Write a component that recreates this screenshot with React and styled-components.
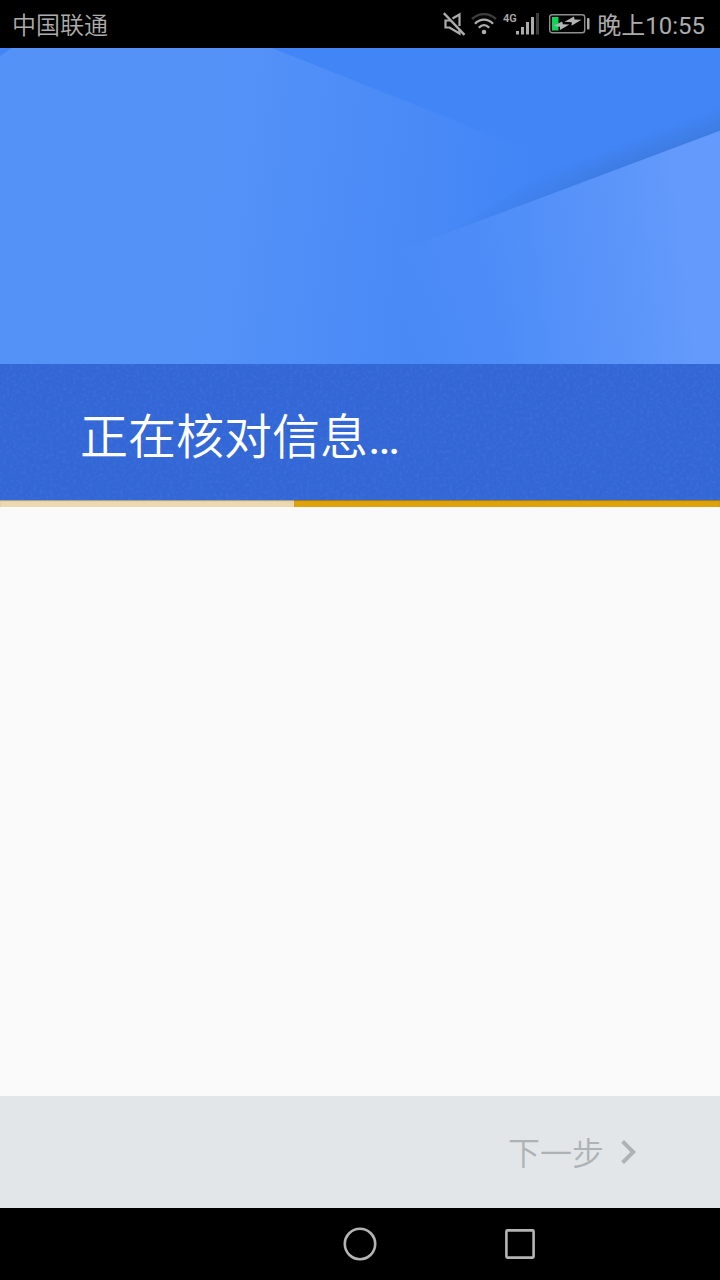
import React from "react";
import styled, { createGlobalStyle } from "styled-components";

const GlobalStyle = createGlobalStyle`
  * { box-sizing: border-box; }
  body {
    margin: 0;
    background: #fafafa;
    font-family: Roboto, "Noto Sans CJK SC", sans-serif;
  }
`;

const Screen = styled.div`
  display: flex;
  flex-direction: column;
  min-height: 100vh;
`;

const StatusBar = styled.header`
  display: flex;
  align-items: center;
  justify-content: space-between;
  height: 48px;
  padding: 0 15px 0 12px;
  background: #000;
  color: #acacac;
  font-size: 24px;
  line-height: 32px;
  white-space: nowrap;
`;

const StatusText = styled.span`
  padding-top: 4px;
  font-weight: ${(p) => p.$weight || 400};
`;

const StatusIcons = styled.div`
  display: flex;
  align-items: center;
  gap: 4px;
`;

const Icon = styled.svg`
  display: block;
  flex: none;
`;

const Art = styled.svg`
  display: block;
  width: 100%;
  aspect-ratio: 720 / 316;
  background: #4285f6;
`;

const TitleBand = styled.div`
  display: grid;
  height: 136px;
  background: #3367d6;
`;

const Grain = styled.svg`
  grid-area: 1 / 1;
  width: 100%;
  height: 100%;
`;

const Title = styled.h1`
  grid-area: 1 / 1;
  align-self: center;
  margin: 0;
  padding: 12px 80px 0;
  color: #fff;
  font-size: 48px;
  font-weight: 350;
  line-height: 64px;
`;

const Ellipsis = styled.span`
  font-weight: 400;
`;

const Progress = styled.div`
  display: flex;
  height: 7px;
  background: #ecd9b0;
  box-shadow: inset 0 1px 1px rgba(60, 60, 60, 0.4);
`;

const ProgressBar = styled.div`
  width: 59.2%;
  margin-left: auto;
  background: #dfa20c;
  box-shadow: inset 0 1px 1px rgba(60, 60, 60, 0.4);
`;

const Content = styled.main`
  flex: 1;
  background: #fafafa;
`;

const Footer = styled.footer`
  display: flex;
  align-items: center;
  justify-content: flex-end;
  height: 112px;
  padding: 0 68px;
  background: #e2e6e9;
`;

const NextButton = styled.button`
  display: flex;
  align-items: center;
  padding: 0;
  border: 0;
  background: none;
  color: #afb2b4;
  font: inherit;
  font-size: 32px;
  font-weight: 350;
  line-height: 48px;
`;

const NextLabel = styled.span`
  padding-top: 4px;
`;

const NavBar = styled.nav`
  display: grid;
  grid-template-columns: repeat(3, 160px);
  justify-content: center;
  height: 72px;
  background: #000;
`;

const NavButton = styled.button`
  grid-column: ${(p) => p.$column};
  display: flex;
  align-items: center;
  justify-content: center;
  padding: 0;
  border: 0;
  background: none;
  color: #b4b4b4;
`;

const MuteIcon = () => (
  <Icon width="24" height="48" viewBox="0 0 24 48" fill="none" stroke="#acacac" strokeWidth="2.200" aria-label="静音" role="img">
    <path d="M7 20.500H2.500v7H6.500L16.500 33.500V30" />
    <path d="M9.500 18.500L16.500 14.500V26" />
    <path d="M0.800 13.200L21.500 34.800" strokeWidth="2.400" />
  </Icon>
);

const WifiIcon = () => (
  <Icon width="28" height="48" viewBox="0 0 28 48" fill="none" strokeWidth="2.400" aria-label="Wi-Fi" role="img">
    <path d="M1 19C8 12.500 18 12.500 25 19" stroke="#3d3d3d" />
    <path d="M4 23.700C9 18.200 17 18.200 22 23.700" stroke="#acacac" />
    <path d="M7.800 27.700C11 24.200 15 24.200 18.200 27.700" stroke="#acacac" />
    <circle cx="13" cy="32" r="2.300" fill="#acacac" />
  </Icon>
);

const SignalIcon = () => (
  <Icon width="42" height="48" viewBox="0 0 42 48" fill="#acacac" aria-label="4G" role="img">
    <text x="0" y="22" fontFamily="Roboto, sans-serif" fontSize="11" fontWeight="600">4G</text>
    <rect x="13" y="31" width="3" height="3.500" />
    <rect x="18" y="27" width="3" height="7.500" />
    <rect x="23" y="22" width="3" height="12.500" />
    <rect x="28" y="17" width="3" height="17.500" />
    <rect x="33" y="13" width="3" height="21.500" fill="#3d3d3d" />
  </Icon>
);

const BatteryIcon = () => (
  <Icon width="44" height="48" viewBox="0 0 44 48" aria-label="正在充电" role="img">
    <rect x="0.700" y="14.700" width="35" height="18" rx="2.500" fill="none" stroke="#8e8e8e" strokeWidth="1.400" />
    <rect x="38" y="18" width="2.500" height="11.500" rx="1" fill="#acacac" />
    <rect x="3" y="17" width="6.500" height="13.500" fill="#0cd558" />
    <path d="M4.500 26L13 21.500 14 24.200 20.500 24.500 11 30 11 26.800z" fill="#b4b4b4" />
    <path d="M15.500 21.800L25 16.500 25.500 19.500 32.500 19.800 22.500 25.800 22.800 22.300z" fill="#b4b4b4" />
  </Icon>
);

function HeroArt() {
  return (
    <Art viewBox="0 0 720 317" preserveAspectRatio="none" aria-hidden="true">
      <defs>
        <linearGradient id="leftFacet" gradientUnits="userSpaceOnUse" x1="215" y1="150" x2="525" y2="185">
          <stop offset="0" stopColor="#5592f8" />
          <stop offset="1" stopColor="#5592f8" stopOpacity="0" />
        </linearGradient>
        <linearGradient id="rightFacet" gradientUnits="userSpaceOnUse" x1="400" y1="240" x2="685" y2="208">
          <stop offset="0" stopColor="#639afb" stopOpacity="0" />
          <stop offset="1" stopColor="#639afb" />
        </linearGradient>
        <linearGradient id="fold" gradientUnits="userSpaceOnUse" x1="640" y1="113" x2="632" y2="92">
          <stop offset="0" stopColor="#3c79dc" stopOpacity="0.750" />
          <stop offset="1" stopColor="#3c79dc" stopOpacity="0" />
        </linearGradient>
        <linearGradient id="foldFade" gradientUnits="userSpaceOnUse" x1="450" y1="0" x2="600" y2="0">
          <stop offset="0" stopColor="#000" />
          <stop offset="1" stopColor="#fff" />
        </linearGradient>
        <mask id="foldMask" maskUnits="userSpaceOnUse" x="0" y="0" width="720" height="317">
          <rect width="720" height="317" fill="url(#foldFade)" />
        </mask>
      </defs>
      <path d="M0 8L12 0H272L560 115V317H0z" fill="url(#leftFacet)" />
      <path d="M450 184.500L720 83V56L560 116z" fill="url(#fold)" mask="url(#foldMask)" />
      <path d="M390 207L720 83V317H390z" fill="url(#rightFacet)" />
    </Art>
  );
}

export default function App() {
  return (
    <Screen lang="zh-CN">
      <GlobalStyle />
      <StatusBar>
        <StatusText $weight={350}>中国联通</StatusText>
        <StatusIcons>
          <MuteIcon />
          <WifiIcon />
          <SignalIcon />
          <BatteryIcon />
          <StatusText>晚上10:55</StatusText>
        </StatusIcons>
      </StatusBar>
      <HeroArt />
      <TitleBand>
        <Grain aria-hidden="true">
          <filter id="grain" x="0" y="0" width="100%" height="100%">
            <feTurbulence type="fractalNoise" baseFrequency="0.3" numOctaves="3" seed="4" />
            <feColorMatrix values="0 0 0 0 0.4  0 0 0 0 0.6  0 0 0 0 1  1 0 0 0 -0.45" />
          </filter>
          <rect width="100%" height="100%" filter="url(#grain)" opacity="0.200" />
        </Grain>
        <Title>正在核对信息<Ellipsis>…</Ellipsis></Title>
      </TitleBand>
      <Progress role="progressbar" aria-label="正在核对信息">
        <ProgressBar />
      </Progress>
      <Content />
      <Footer>
        <NextButton type="button" disabled>
          <NextLabel>下一步</NextLabel>
          <Icon width="48" height="48" viewBox="0 0 24 24" fill="currentColor" aria-hidden="true">
            <path d="M10 6L8.590 7.410 13.170 12l-4.580 4.590L10 18l6-6z" />
          </Icon>
        </NextButton>
      </Footer>
      <NavBar>
        <NavButton type="button" $column={2} aria-label="主屏幕">
          <Icon width="36" height="36" viewBox="0 0 36 36" fill="none" stroke="currentColor" strokeWidth="2.600">
            <circle cx="18" cy="18" r="15.200" />
          </Icon>
        </NavButton>
        <NavButton type="button" $column={3} aria-label="最近任务">
          <Icon width="36" height="36" viewBox="0 0 36 36" fill="none" stroke="currentColor" strokeWidth="2.600">
            <rect x="4.400" y="4.400" width="27.200" height="27.200" rx="1" />
          </Icon>
        </NavButton>
      </NavBar>
    </Screen>
  );
}
